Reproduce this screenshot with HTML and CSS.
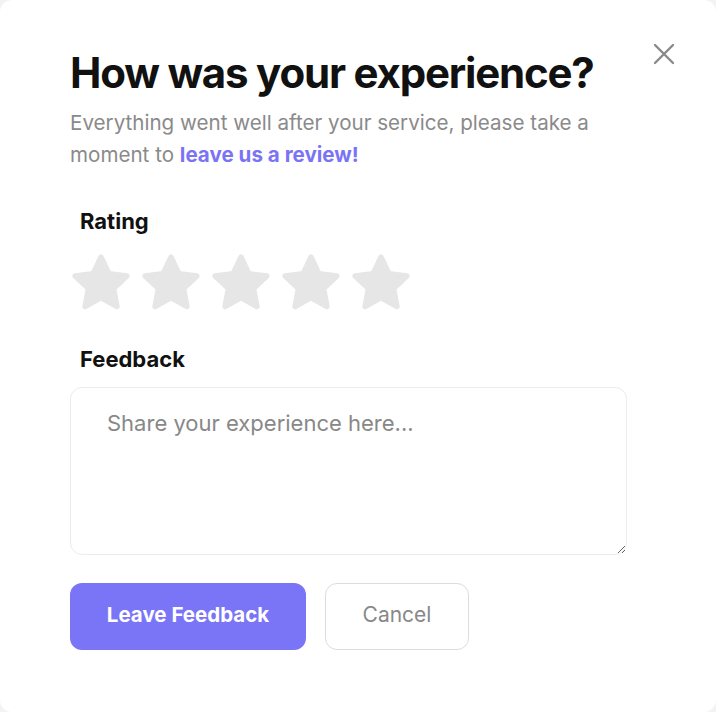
FILE: index.html
```html
<!DOCTYPE html>
<html lang="en">
<head>
	<meta charset="UTF-8">
	<title>Feedback</title>
	<link rel="stylesheet" href="styles.css">
</head>
<body>
	<div class="card">
		<button class="close" aria-label="Close">
			<svg width="24" height="24" viewBox="0 0 24 24"><path d="M3 3L21 21M21 3L3 21" stroke="#8a8a8a" stroke-width="2.4" stroke-linecap="round" fill="none"/></svg>
		</button>
		<h1 class="title">How was your experience?</h1>
		<p class="intro">Everything went well after your service, please take a moment to <a href="#">leave us a review!</a></p>

		<div class="label">Rating</div>
		<div class="stars">
			<svg class="star" viewBox="0 0 24 24"><path d="M12 2.6l2.85 6.05 6.55.8-4.85 4.55 1.25 6.55L12 17.3l-5.8 3.25 1.25-6.55L2.6 9.45l6.55-.8z"/></svg>
			<svg class="star" viewBox="0 0 24 24"><path d="M12 2.6l2.85 6.05 6.55.8-4.85 4.55 1.25 6.55L12 17.3l-5.8 3.25 1.25-6.55L2.6 9.45l6.55-.8z"/></svg>
			<svg class="star" viewBox="0 0 24 24"><path d="M12 2.6l2.85 6.05 6.55.8-4.85 4.55 1.25 6.55L12 17.3l-5.8 3.25 1.25-6.55L2.6 9.45l6.55-.8z"/></svg>
			<svg class="star" viewBox="0 0 24 24"><path d="M12 2.6l2.85 6.05 6.55.8-4.85 4.55 1.25 6.55L12 17.3l-5.8 3.25 1.25-6.55L2.6 9.45l6.55-.8z"/></svg>
			<svg class="star" viewBox="0 0 24 24"><path d="M12 2.6l2.85 6.05 6.55.8-4.85 4.55 1.25 6.55L12 17.3l-5.8 3.25 1.25-6.55L2.6 9.45l6.55-.8z"/></svg>
		</div>

		<div class="label">Feedback</div>
		<textarea class="feedback" placeholder="Share your experience here..."></textarea>

		<div class="actions">
			<button class="btn primary">Leave Feedback</button>
			<button class="btn ghost">Cancel</button>
		</div>
	</div>
</body>
</html>
```

FILE: styles.css
```css
*{
	box-sizing: border-box;
}
body{
	margin: 0;
	background: #f3f3f3;
	font-family: "Inter", "Liberation Sans", sans-serif;
}
.card{
	position: relative;
	height: 712px;
	background: #fff;
	border-radius: 12px;
	padding: 48px 70px 0 70px;
}
.close{
	position: absolute;
	top: 42px;
	right: 40px;
	border: none;
	background: none;
	padding: 0;
	cursor: pointer;
}
.title{
	margin: 0;
	font-size: 42px;
	line-height: 50px;
	font-weight: 700;
	letter-spacing: -1.2px;
	color: #111;
}
.intro{
	margin: 9px 0 0 0;
	font-size: 20.6px;
	line-height: 32px;
	color: #8a8a8a;
	max-width: 550px;
}
.intro a{
	color: #7b73f5;
	font-weight: 700;
	text-decoration: none;
}
.label{
	margin-left: 10px;
	font-size: 22px;
	line-height: 28px;
	font-weight: 700;
	color: #111;
}
.intro + .label{
	margin-top: 36px;
}
.stars{
	display: flex;
	gap: 4px;
	margin: 15px 0 29px -2px;
}
.star{
	width: 66px;
	height: 66px;
	fill: #e6e6e6;
	stroke: #e6e6e6;
	stroke-width: 2;
	stroke-linejoin: round;
}
.feedback{
	display: block;
	width: 557px;
	height: 168px;
	margin-top: 14px;
	padding: 22px 36px;
	border: 1px solid #ececec;
	border-radius: 12px;
	font-family: inherit;
	font-size: 22px;
	color: #333;
	outline: none;
}
.feedback::placeholder{
	color: #888;
}
.actions{
	display: flex;
	gap: 19px;
	margin-top: 28px;
}
.btn{
	height: 67px;
	padding: 0 0 4px 0;
	border-radius: 12px;
	font-family: inherit;
	cursor: pointer;
}
.primary{
	width: 236px;
	border: none;
	background: #7a74f6;
	color: #fff;
	font-size: 20.5px;
	font-weight: 700;
}
.ghost{
	width: 144px;
	border: 1px solid #dcdcdc;
	background: #fff;
	color: #888;
	font-size: 21px;
}
```
